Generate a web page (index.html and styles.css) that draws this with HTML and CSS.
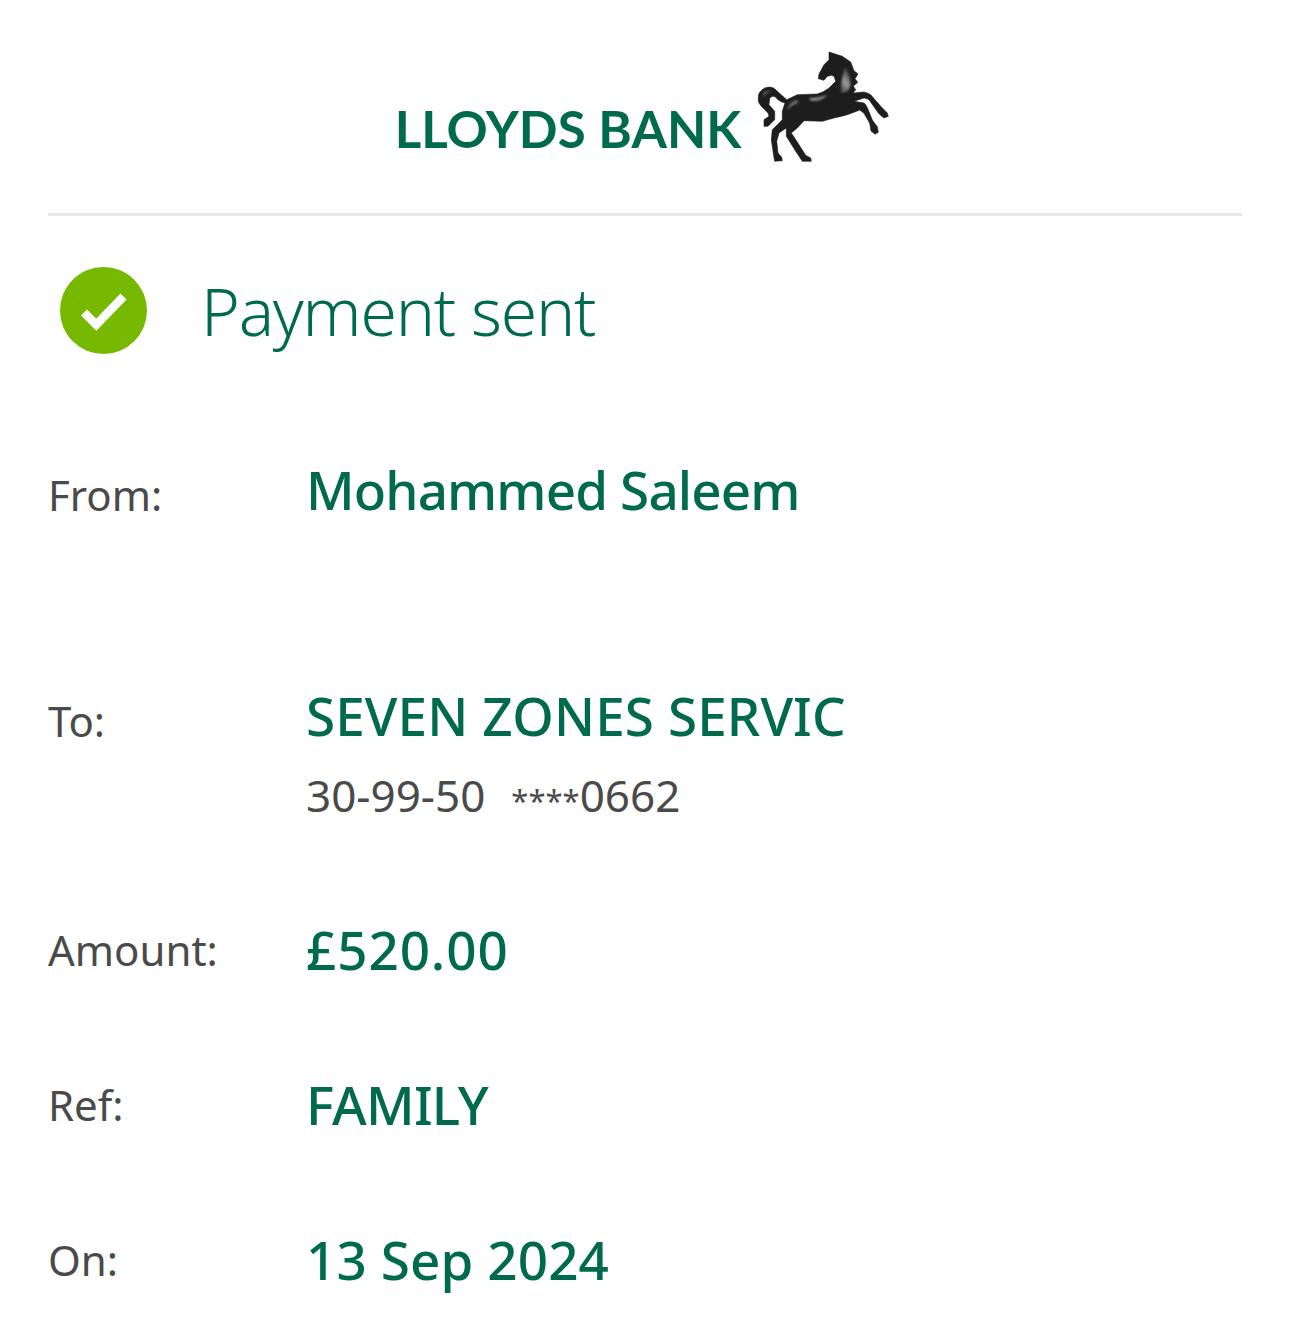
FILE: index.html
```html
<!DOCTYPE html>
<html lang="en">
<head>
<meta charset="utf-8">
<title>Payment sent</title>
<link rel="stylesheet" href="styles.css">
</head>
<body>
<main class="page">
  <header class="brand">
    <span class="brand-name">LLOYDS BANK</span>
    <svg class="horse" viewBox="750 45 150 125" aria-hidden="true">
      <defs>
        <filter id="soft" x="-50%" y="-50%" width="200%" height="200%"><feGaussianBlur stdDeviation="1.3"/></filter>
        <linearGradient id="neck" x1="0.7" y1="0" x2="0.3" y2="1">
          <stop offset="0" stop-color="#2a292a"/>
          <stop offset="0.6" stop-color="#9c9a9c"/>
          <stop offset="1" stop-color="#4c4b4c"/>
        </linearGradient>
      </defs>
      <path class="horse-body" d="M830 52 L834 53.3 L843.3 56.3 L851.7 62 L855 70.7 L859 74 L856 78.7 L858.7 82.3 L854.3 86.3 L856.7 89.7 L854 93 L865 92 Q868 92.5 871.7 94.7 L881.7 106.3 L888.3 113 L889.3 116.3 L885 118 Q882 116 879.3 113 L870 99.7 Q867 98 865 98 L855 101.3 L865 103 Q867 104 869.3 110 L873.3 120 L878.3 126.7 L879.3 132.3 L876 134.3 L872 131 L870.7 123.3 L865 113.3 L860.7 110 Q850 115 835 118 L823.3 121.3 L805 120.7 L798.3 128 L792.3 133 L795.7 138 L806.7 155.3 L811.7 158 L812.3 161.3 L803.3 161.3 L796.7 151.3 L787.3 136.3 L787.3 128 L780 133 L777.7 141.3 L779 153 L782.7 157.3 L783.3 160.7 L775.7 161.3 L775 158 L772.3 139.7 L773.3 129.7 L783.3 119.7 L783.3 111.3 L786 103 Q782 102 779 99.7 Q776 96.5 775 96.3 Q771 96.5 770.7 98.7 L770 104.7 L775.7 111.3 L775.7 119.7 L769 126.3 L765 126.3 L765 119.7 L770 116.3 L769 113 L763.3 107.3 Q759 103 759.3 99.7 Q759 93 761.7 91.3 Q765 87 770 87 Q775 87 778.3 91.3 L787.7 99.7 L798.3 94.7 L818.3 94 Q825 92 830 88 L836.7 81.3 L835 76.3 L832.7 75.3 L828.3 76.3 L825 80.3 L819.3 78.7 L820 74 L825 64.7 L830 59.7 Z"/>
      <path class="horse-glint" fill="url(#neck)" d="M846 67 Q851 74 851.5 84 Q850 93 842 93 Q841 84 846 67 Z"/>
      <path class="horse-glint" fill="#8a888a" d="M810 98 Q820 98 828 95 Q824 101 812 101 Z"/>
      <path class="horse-glint" fill="#777577" d="M797 100 Q790 103 788 110 Q793 105 800 102 Z"/>
      <path class="horse-glint" fill="#666466" d="M764 94 Q767 90 772 91 Q767 92 765 97 Z"/>
    </svg>
  </header>
  <hr class="rule">
  <section class="status">
    <svg class="tick" viewBox="0 0 88 88" aria-hidden="true">
      <circle cx="44.5" cy="44.5" r="43.5" fill="#76b900"/>
      <path d="M25 46.5 L37.3 58.8 L64.5 30.5" fill="none" stroke="#fff" stroke-width="8.5"/>
    </svg>
    <h1 class="status-title">Payment sent</h1>
  </section>
  <dl class="details">
    <div class="row row-from">
      <dt class="label">From:</dt>
      <dd class="value">Mohammed Saleem</dd>
    </div>
    <div class="row row-to">
      <dt class="label">To:</dt>
      <dd class="value">SEVEN ZONES SERVIC
        <div class="account"><span class="sort">30-99-50</span><span class="stars">****</span><span>0662</span></div>
      </dd>
    </div>
    <div class="row row-amount">
      <dt class="label">Amount:</dt>
      <dd class="value">£520.00</dd>
    </div>
    <div class="row row-ref">
      <dt class="label">Ref:</dt>
      <dd class="value">FAMILY</dd>
    </div>
    <div class="row row-on">
      <dt class="label">On:</dt>
      <dd class="value">13 Sep 2024</dd>
    </div>
  </dl>
</main>
</body>
</html>
```
FILE: styles.css
```css
* { box-sizing: border-box; }
html, body { margin: 0; padding: 0; background: #fff; }
body { font-family: "Noto Sans", "Open Sans", sans-serif; }
.page { padding: 0 48px; height: 1339px; overflow: hidden; }
.brand {
  display: flex;
  justify-content: center;
  align-items: flex-end;
  height: 170px;
  padding-left: 4px;
}
.brand-name {
  font-family: "Lato", sans-serif;
  font-weight: 700;
  font-size: 51px;
  line-height: 60px;
  letter-spacing: 0.1px;
  color: #006a4d;
  margin-bottom: 11px;
}
.horse { flex: none; width: 150px; height: 125px; margin-left: 8px; }
.horse-body { fill: #1e1d1e; stroke: #1e1d1e; stroke-width: 0.6; stroke-linejoin: round; }
.horse-glint { filter: url(#soft); }
.rule { border: 0; height: 3px; background: #e8e8e8; margin: 43px 0 0; }
.status { display: flex; align-items: center; margin-top: 50px; padding-left: 11px; gap: 54px; }
.tick { width: 88px; height: 88px; flex: none; overflow: visible; }
.status-title {
  margin: 0;
  font-weight: 300;
  font-size: 66px;
  line-height: 88px;
  color: #006a4d;
  letter-spacing: -1.2px;
}
.details { margin: 0; }
.row { display: grid; grid-template-columns: 258px 1fr; align-items: start; }
.label { font-size: 42px; line-height: 60px; color: #4a4a4a; }
.value { margin: 0; font-size: 53px; line-height: 60px; font-weight: 500; color: #006a4d; }
.row-from .label, .row-to .label { padding-top: 5px; }
.row-from { margin-top: 106px; }
.row-from .value { letter-spacing: -0.88px; }
.row-to { margin-top: 161px; }
.row-to .value { letter-spacing: 0.1px; }
.row-amount { margin-top: 90px; }
.row-amount .value { letter-spacing: 0.9px; }
.row-ref { margin-top: 95px; }
.row-ref .value { letter-spacing: -0.8px; }
.row-on { margin-top: 95px; }
.row-on .value { letter-spacing: 0.1px; }
.account { font-size: 44px; line-height: 60px; font-weight: 400; letter-spacing: 0; color: #4a4a4a; margin-top: 19px; }
.sort { margin-right: 26px; }
.stars { font-size: 31px; }
```
